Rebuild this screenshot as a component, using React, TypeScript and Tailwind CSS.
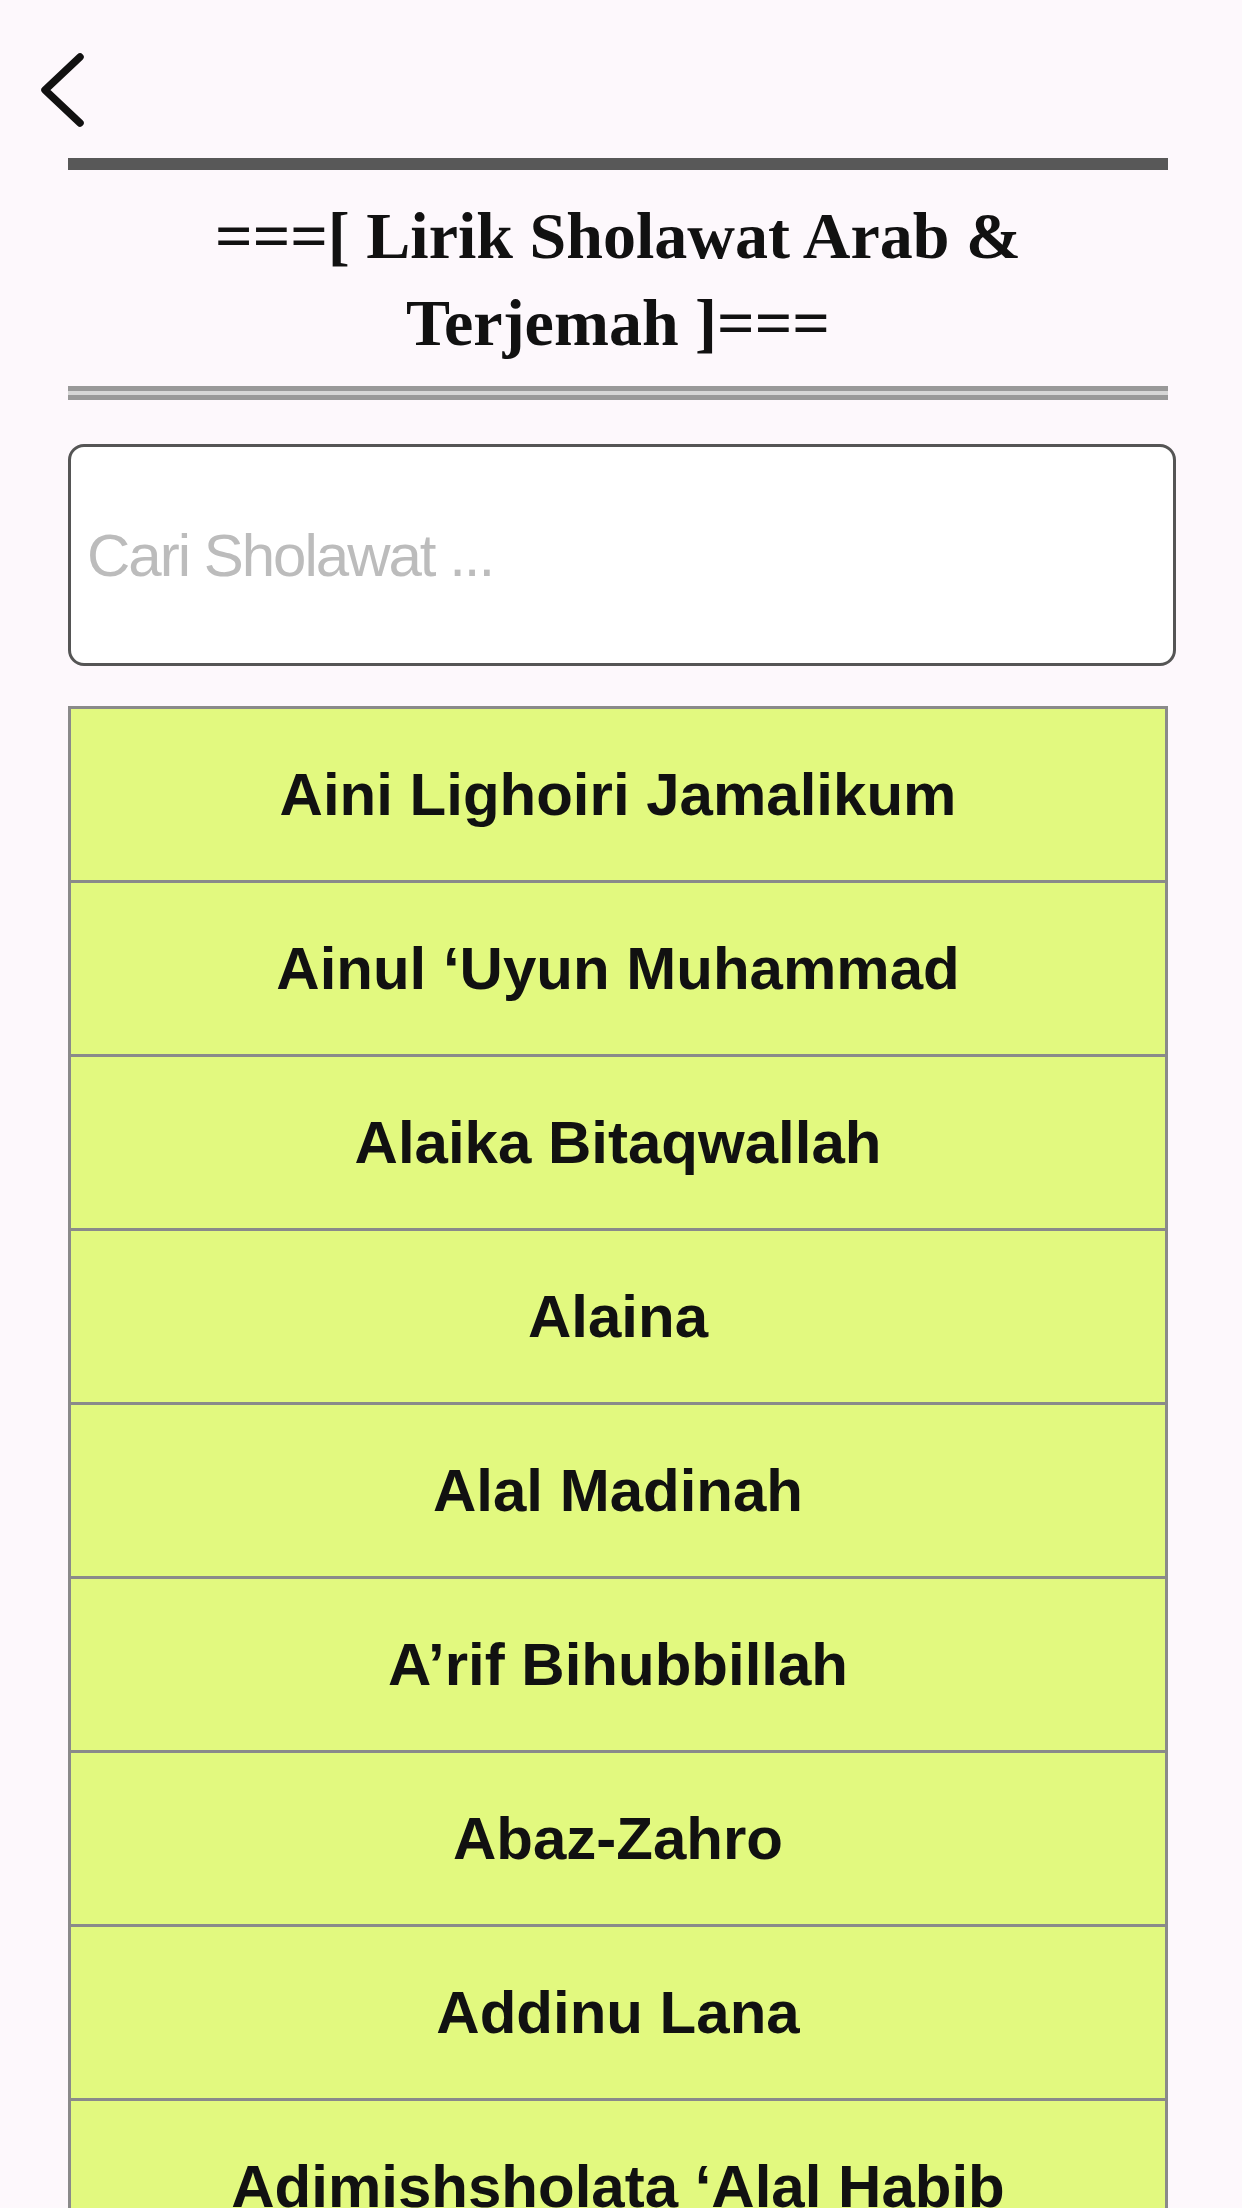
import React, { useState } from "react";

const sholawatList: string[] = [
  "Aini Lighoiri Jamalikum",
  "Ainul ‘Uyun Muhammad",
  "Alaika Bitaqwallah",
  "Alaina",
  "Alal Madinah",
  "A’rif Bihubbillah",
  "Abaz-Zahro",
  "Addinu Lana",
  "Adimishsholata ‘Alal Habib",
];

const App: React.FC = () => {
  const [query, setQuery] = useState("");

  const filtered = sholawatList.filter((s) =>
    s.toLowerCase().includes(query.toLowerCase())
  );

  return (
    <div className="min-h-screen w-full bg-[#fdf8fc] overflow-hidden">
      {/* Back button */}
      <div className="pl-[40px] pt-[52px] h-[158px]">
        <button className="block focus:outline-none">
          <svg width="46" height="76" viewBox="0 0 46 76" fill="none">
            <path
              d="M40 5 L5 38 L40 71"
              stroke="#111"
              strokeWidth="7.5"
              strokeLinecap="round"
              strokeLinejoin="round"
            />
          </svg>
        </button>
      </div>

      <div className="ml-[68px] w-[1100px]">
        {/* Header */}
        <div className="h-[12px] bg-[#585858]" />
        <h1 className="pt-[22px] pb-[20px] text-center text-[66px] leading-[87px] font-bold text-[#111] font-['Liberation_Serif',serif]">
          ===[ Lirik Sholawat Arab &amp;
          <br />
          Terjemah ]===
        </h1>
        <div className="h-[14px] border-t-[5px] border-b-[5px] border-[#999999] bg-[#d6d6d6]" />

        {/* Search */}
        <div className="mt-[44px] w-[1108px]">
          <input
            value={query}
            onChange={(e) => setQuery(e.target.value)}
            placeholder="Cari Sholawat ..."
            className="w-full h-[222px] rounded-[16px] border-[3px] border-[#555555] bg-white pl-[16px] text-[60px] tracking-[-2px] text-[#222] placeholder:text-[#bcbcbc] font-['Liberation_Sans',Arial,sans-serif] focus:outline-none"
          />
        </div>

        {/* List */}
        <div className="mt-[40px] border-x-[3px] border-[#8a8a8a]">
          {filtered.map((title) => (
            <a
              key={title}
              href="#"
              className="flex h-[174px] items-center justify-center border-t-[3px] border-[#8a8a8a] bg-[#e2f97f] text-[60px] font-bold text-[#111] font-['Liberation_Sans',Arial,sans-serif]"
            >
              {title}
            </a>
          ))}
        </div>
      </div>
    </div>
  );
};

export default App;
